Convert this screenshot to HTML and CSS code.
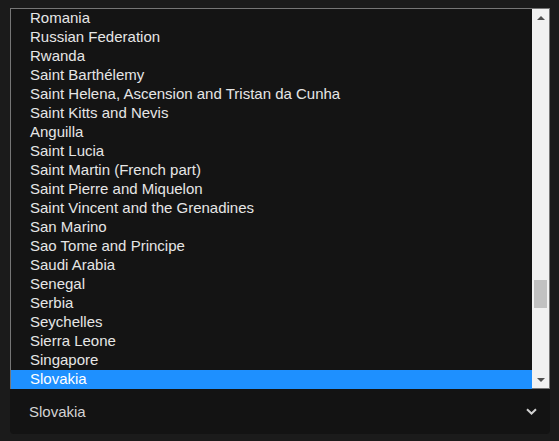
FILE: index.html
```html
<!DOCTYPE html>
<html>
<head>
<meta charset="utf-8">
<link rel="stylesheet" href="styles.css">
</head>
<body>
<div class="wrap">
  <div class="listbox">
    <ul class="options">
      <li>Romania</li>
      <li>Russian Federation</li>
      <li>Rwanda</li>
      <li>Saint Barthélemy</li>
      <li>Saint Helena, Ascension and Tristan da Cunha</li>
      <li>Saint Kitts and Nevis</li>
      <li>Anguilla</li>
      <li>Saint Lucia</li>
      <li>Saint Martin (French part)</li>
      <li>Saint Pierre and Miquelon</li>
      <li>Saint Vincent and the Grenadines</li>
      <li>San Marino</li>
      <li>Sao Tome and Principe</li>
      <li>Saudi Arabia</li>
      <li>Senegal</li>
      <li>Serbia</li>
      <li>Seychelles</li>
      <li>Sierra Leone</li>
      <li>Singapore</li>
      <li class="selected">Slovakia</li>
    </ul>
    <div class="scrollbar">
      <div class="arrow up"></div>
      <div class="track"><div class="thumb"></div></div>
      <div class="arrow down"></div>
    </div>
  </div>
  <div class="select">
    <span class="value">Slovakia</span>
    <svg class="chevron" width="11" height="7" viewBox="0 0 11 7"><path d="M1 1.2 L5.5 5.5 L10 1.2" fill="none" stroke="#d0d0d0" stroke-width="2"/></svg>
  </div>
</div>
</body>
</html>
```
FILE: styles.css
```css
html, body {
  margin: 0;
  padding: 0;
  background: #1b1b1b;
}
body {
  font-family: "Liberation Sans", Arial, sans-serif;
  font-size: 15px;
}
.wrap {
  padding: 8px 9px 0 10px;
}
.listbox {
  display: flex;
  height: 379px;
  border: 1px solid #767676;
  background: #141414;
  position: relative;
  z-index: 1;
}
.options {
  list-style: none;
  margin: 0;
  padding: 0;
  flex: 1;
}
.options li {
  height: 19px;
  line-height: 17px;
  padding-left: 19px;
  box-sizing: border-box;
  color: #e6e6e6;
  white-space: nowrap;
}
.options li.selected {
  background: #1e90ff;
  color: #ffffff;
}
.scrollbar {
  width: 17px;
  background: #f1f1f1;
  display: flex;
  flex-direction: column;
}
.arrow {
  height: 17px;
  display: flex;
  align-items: center;
  justify-content: center;
}
.arrow::before {
  content: "";
  width: 0;
  height: 0;
  border-left: 4px solid transparent;
  border-right: 4px solid transparent;
}
.arrow.up::before {
  border-bottom: 4px solid #505050;
}
.arrow.down::before {
  border-top: 4px solid #505050;
}
.track {
  flex: 1;
  position: relative;
}
.thumb {
  position: absolute;
  left: 2px;
  right: 2px;
  top: 254px;
  height: 28px;
  background: #c1c1c1;
}
.select {
  margin-top: -4px;
  border-radius: 4px;
  background: #131313;
  display: flex;
  align-items: center;
  justify-content: space-between;
  padding: 4px 13px 0 19px;
  box-sizing: border-box;
  height: 49px;
}
.value {
  color: #d4d4d4;
  font-size: 15px;
}
.chevron {
  display: block;
}
```
